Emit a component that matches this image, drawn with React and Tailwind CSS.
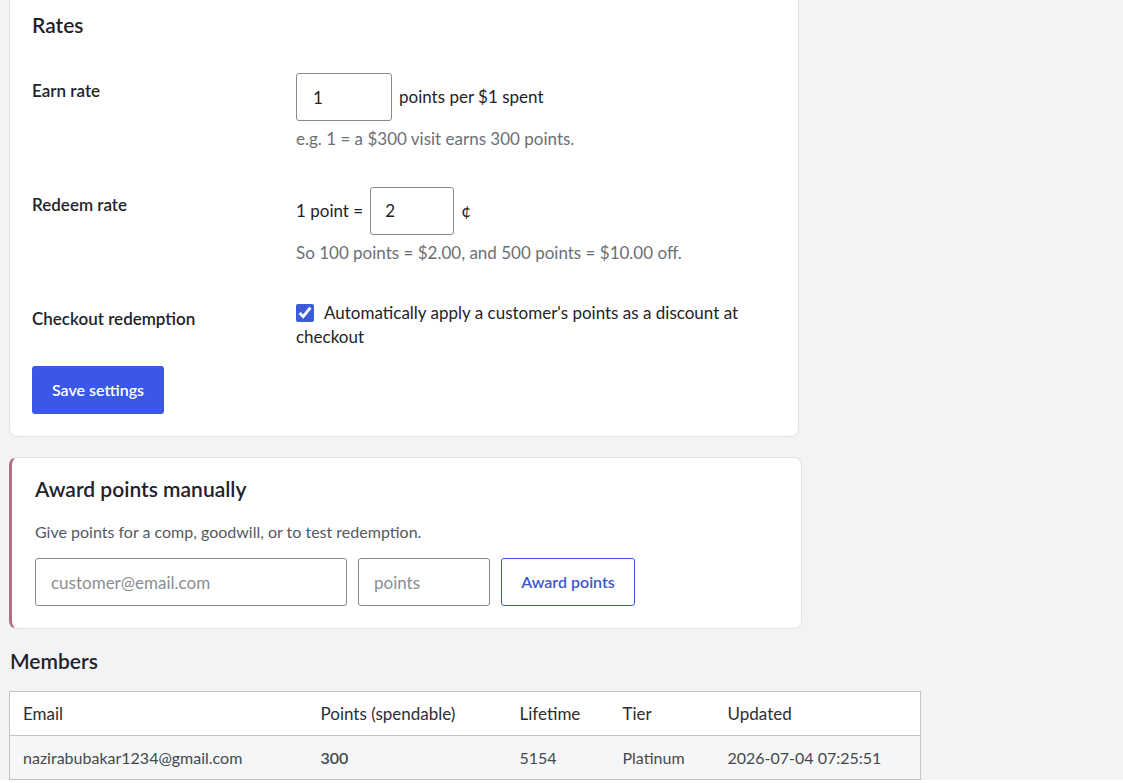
export default function App() {
  return (
    <div className="min-h-[783px] bg-[#f3f3f5] px-[9px] text-[#1f2328] font-['Segoe_UI',Lato,sans-serif]">
      {/* Rates card, scrolled so its top edge is out of view */}
      <div className="-mt-[20px] w-[790px] rounded-lg border border-[#e3e3e7] bg-white px-[22px] pt-[31px] pb-[22px]">
        <h2 className="text-[21px] font-semibold leading-[26px]">Rates</h2>

        <div className="mt-[35px] flex">
          <div className="w-[264px] pt-[5px] text-[17px] font-semibold">Earn rate</div>
          <div>
            <div className="flex items-center gap-[7px]">
              <input
                readOnly
                value="1"
                className="h-[48px] w-[96px] rounded-[3px] border border-[#8a8a8a] px-[16px] text-[17px] outline-none"
              />
              <span className="text-[17px]">points per $1 spent</span>
            </div>
            <p className="mt-[5px] text-[17px] text-[#6b6f76]">e.g. 1 = a $300 visit earns 300 points.</p>
          </div>
        </div>

        <div className="mt-[35px] flex">
          <div className="w-[264px] pt-[5px] text-[17px] font-semibold">Redeem rate</div>
          <div>
            <div className="flex items-center gap-[7px]">
              <span className="text-[17px]">1 point =</span>
              <input
                readOnly
                value="2"
                className="h-[48px] w-[84px] rounded-[3px] border border-[#8a8a8a] px-[14px] text-[17px] outline-none"
              />
              <span className="text-[17px]">¢</span>
            </div>
            <p className="mt-[5px] text-[17px] text-[#6b6f76]">So 100 points = $2.00, and 500 points = $10.00 off.</p>
          </div>
        </div>

        <div className="mt-[33px] flex">
          <div className="w-[264px] pt-[8px] text-[17px] font-semibold">Checkout redemption</div>
          <label className="w-[460px] pt-[3px] text-[17px] leading-[24px]">
            <input type="checkbox" defaultChecked className="mr-[10px] h-[18px] w-[18px] align-[-3px] accent-[#3b5bdb]" />
            Automatically apply a customer's points as a discount at checkout
          </label>
        </div>

        <button className="mt-[17px] h-[48px] rounded-[3px] bg-[#3b57e8] px-[20px] text-[16px] font-semibold text-white">
          Save settings
        </button>
      </div>

      {/* Award points */}
      <div className="mt-[20px] w-[793px] rounded-lg border border-[#e3e3e7] border-l-[3px] border-l-[#b56d80] bg-white px-[23px] pt-[17px] pb-[22px]">
        <h2 className="text-[21px] font-semibold leading-[28px]">Award points manually</h2>
        <p className="mt-[17px] text-[16px] text-[#55595f]">Give points for a comp, goodwill, or to test redemption.</p>
        <div className="mt-[14px] flex gap-[11px]">
          <input
            placeholder="customer@email.com"
            className="h-[48px] w-[312px] rounded-[3px] border border-[#8a8a8a] px-[15px] text-[17px] outline-none placeholder:text-[#8a8d92]"
          />
          <input
            placeholder="points"
            className="h-[48px] w-[132px] rounded-[3px] border border-[#8a8a8a] px-[15px] text-[17px] outline-none placeholder:text-[#8a8d92]"
          />
          <button className="h-[48px] w-[134px] rounded-[3px] border border-[#3b57d0] bg-white text-[16px] font-semibold text-[#3b57d0]">
            Award points
          </button>
        </div>
      </div>

      {/* Members */}
      <h2 className="mt-[19px] pl-[1px] text-[21px] font-semibold leading-[26px]">Members</h2>
      <table className="mt-[17px] w-[912px] border-collapse border border-[#c4c4c6] bg-white text-left text-[17px]">
        <thead>
          <tr className="h-[44px] border-b border-[#c4c4c6]">
            <th className="w-[311px] pl-[13px] font-normal text-[#2b2f33]">Email</th>
            <th className="w-[199px] font-normal text-[#2b2f33]">Points (spendable)</th>
            <th className="w-[103px] font-normal text-[#2b2f33]">Lifetime</th>
            <th className="w-[105px] font-normal text-[#2b2f33]">Tier</th>
            <th className="font-normal text-[#2b2f33]">Updated</th>
          </tr>
        </thead>
        <tbody>
          <tr className="h-[44px] bg-[#f5f6f7] text-[16px] text-[#44484d]">
            <td className="pl-[13px]">nazirabubakar1234@gmail.com</td>
            <td className="font-semibold">300</td>
            <td>5154</td>
            <td>Platinum</td>
            <td>2026-07-04 07:25:51</td>
          </tr>
        </tbody>
      </table>
    </div>
  );
}
